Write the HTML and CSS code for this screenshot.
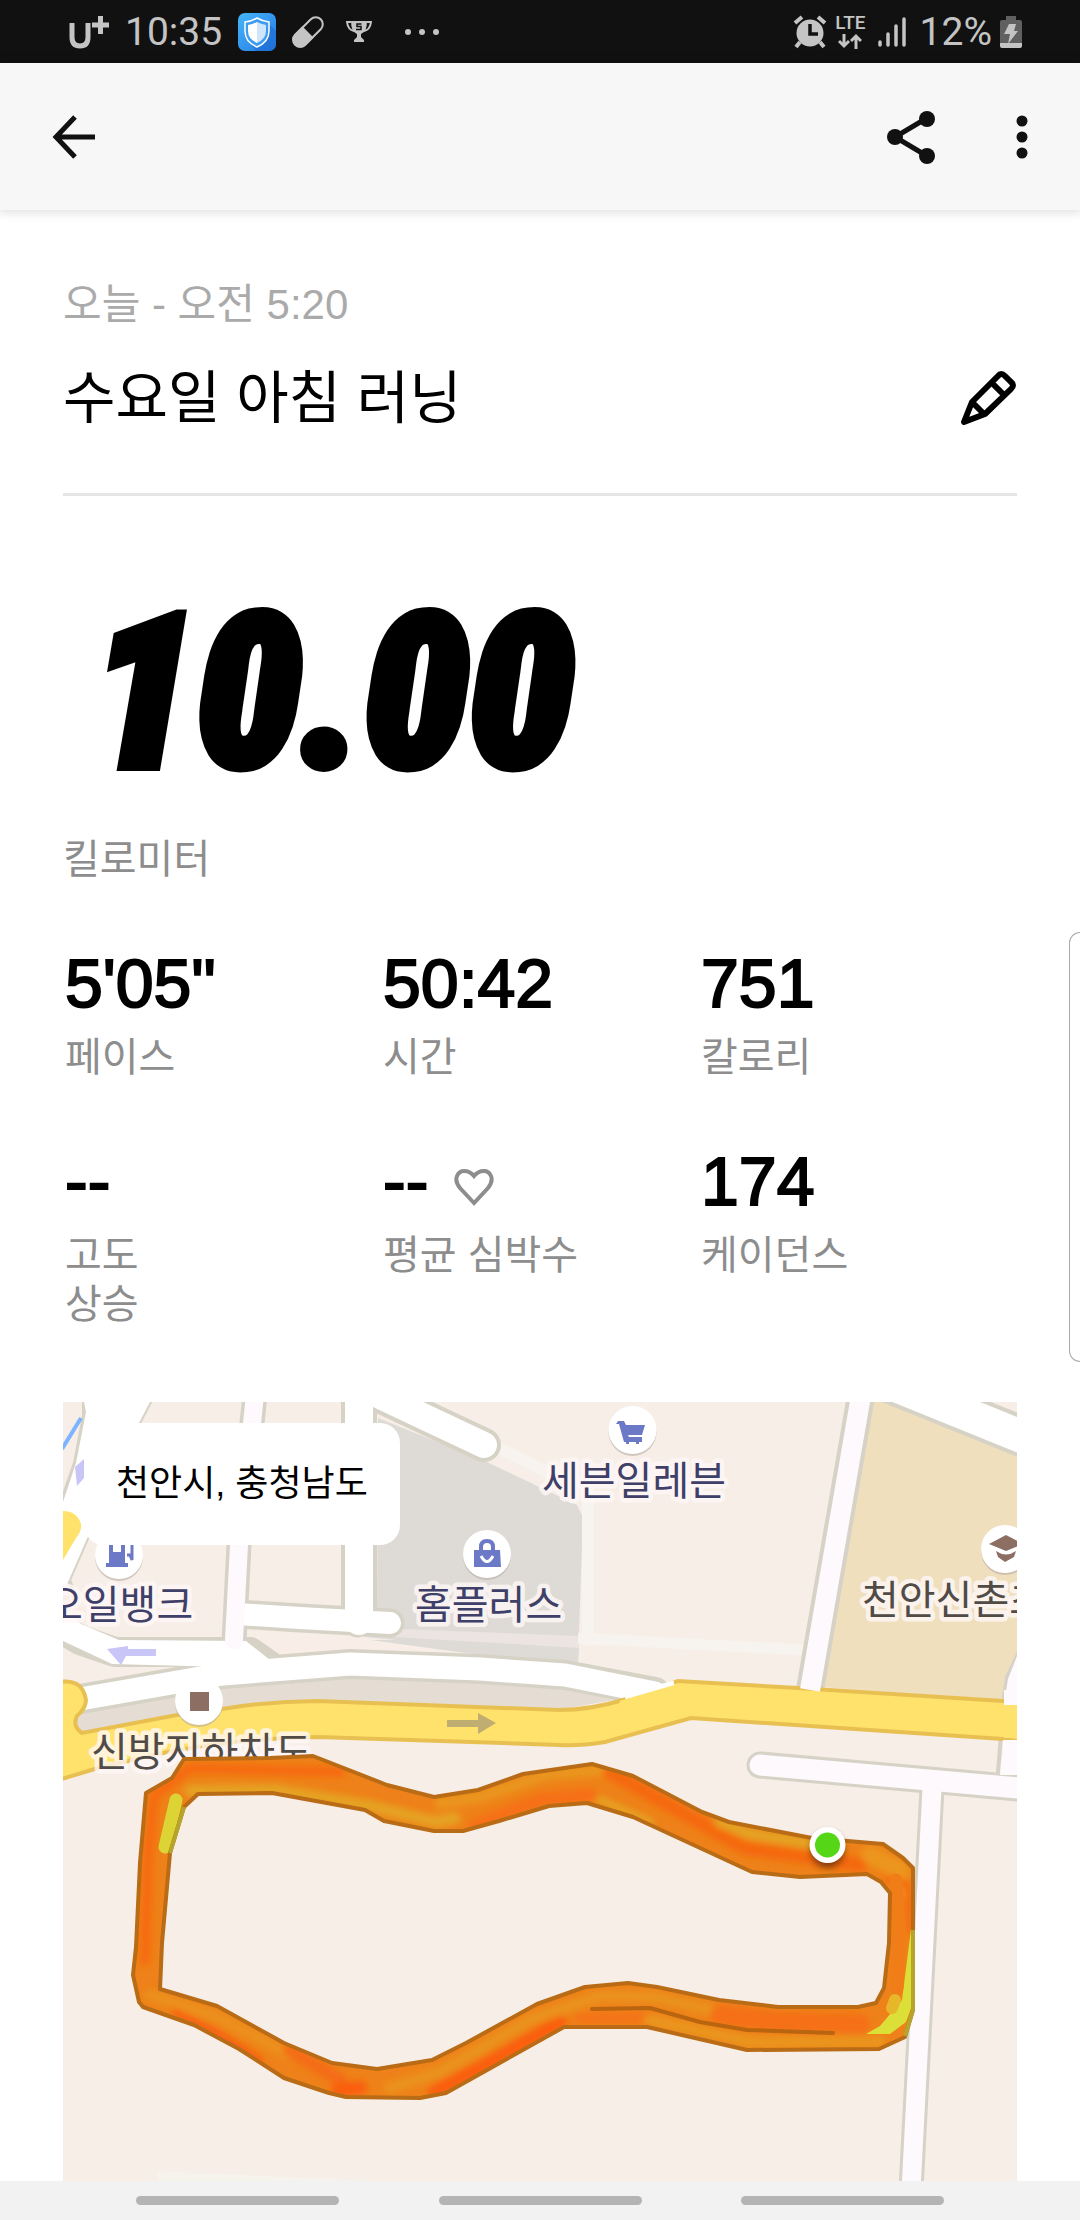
FILE: index.html
```html
<!DOCTYPE html>
<html lang="ko">
<head>
<meta charset="utf-8">
<meta name="viewport" content="width=device-width, initial-scale=1">
<title>수요일 아침 러닝</title>
<link rel="stylesheet" href="styles.css">
</head>
<body>
<div class="status">
  <div class="status-group">
    <svg class="carrier" width="42" height="36" viewBox="0 0 42 36" aria-label="U+"><path d="M3 9v14q0 9 8 9t8-9V9" fill="none" stroke="#c4c4c4" stroke-width="5"/><path d="M23 11h17M31.500 2v18" stroke="#c4c4c4" stroke-width="5"/></svg>
    <span class="clock">10:35</span>
    <svg class="shield" width="38" height="38" viewBox="0 0 38 38" aria-hidden="true"><defs><linearGradient id="sh" x1="0" y1="0" x2="1" y2="1"><stop offset="0" stop-color="#45b5fb"/><stop offset="1" stop-color="#2478e2"/></linearGradient></defs><rect width="38" height="38" rx="7" fill="url(#sh)"/><path d="M31 11l7 7v13q0 7-7 7H18l-6-8z" fill="#1e6bd0" opacity=".6"/><path d="M19 5q5 3 12 4v9q0 11-12 16Q7 29 7 18V9q7-1 12-4z" fill="#3d9cf2" stroke="#fff" stroke-width="1.500"/><path d="M19 9q4 2 9 3v6q0 8-9 12z" fill="#cfe5fb"/><path d="M19 9q-4 2-9 3v6q0 8 9 12z" fill="#fff"/></svg>
    <svg class="pill" width="32" height="32" viewBox="0 0 32 32" aria-hidden="true"><g transform="rotate(45 16 16)"><rect x="9" y="-2" width="14" height="36" rx="7" fill="none" stroke="#c4c4c4" stroke-width="2"/><path d="M8 16h16v11a8 8 0 0 1-16 0z" fill="#c4c4c4"/></g></svg>
    <svg class="trophy" width="26" height="24" viewBox="0 0 26 24" aria-hidden="true"><path d="M5 1h16q0 11-6 13v3l3 3v2H8v-2l3-3v-3Q5 12 5 1z" fill="#c4c4c4"/><path d="M5 2H1q1 8 7 9M21 2h4q-1 8-7 9" fill="none" stroke="#c4c4c4" stroke-width="2"/><path d="M15.500 4h-4.500v2.500h4v3h-5" fill="none" stroke="#111" stroke-width="1.500"/></svg>
    <svg class="dots" width="36" height="8" viewBox="0 0 36 8" fill="#c4c4c4" aria-hidden="true"><circle cx="4" cy="4" r="3"/><circle cx="18" cy="4" r="3"/><circle cx="32" cy="4" r="3"/></svg>
  </div>
  <div class="status-group">
    <svg class="alarm" width="34" height="34" viewBox="0 0 34 34" aria-hidden="true"><circle cx="17" cy="18" r="13.500" fill="#c4c4c4"/><path d="M2 8l7-6M32 8l-7-6" stroke="#c4c4c4" stroke-width="4"/><path d="M7 27l-4 5M27 27l4 5" stroke="#c4c4c4" stroke-width="4"/><path d="M17 9v10h8" fill="none" stroke="#111" stroke-width="3.500"/></svg>
    <span class="lte">LTE<svg width="24" height="16" viewBox="0 0 24 16" fill="none" stroke="#c4c4c4" stroke-width="3" aria-hidden="true"><path d="M6 1v12M1 8l5 5 5-5M18 16V3M13 8l5-5 5 5"/></svg></span>
    <svg class="signal" width="28" height="32" viewBox="0 0 28 32" stroke="#c4c4c4" stroke-width="3.500" stroke-linecap="round" aria-hidden="true"><path d="M2 26v3M10 18v11M18 10v19M26 3v26"/></svg>
    <span class="clock">12%</span>
    <svg class="battery" width="22" height="34" viewBox="0 0 22 34" aria-hidden="true"><path d="M6 1h10v4h4q2 0 2 2v21H0V7q0-2 2-2h4z" fill="#606060"/><path d="M0 28h22v3q0 2-2 2H2q-2 0-2-2z" fill="#c4c4c4"/><path d="M9 9h7l-2 7h4L8 29l2-10H4z" fill="#c4c4c4"/></svg>
  </div>
</div>

<header class="bar">
  <button class="icon-button" type="button" aria-label="뒤로"><svg width="44" height="44" viewBox="0 0 44 44" fill="none" stroke="#111" stroke-width="5"><path d="M43 22H5M23 2L4 22l19 20"/></svg></button>
  <div class="bar-actions">
    <button class="icon-button" type="button" aria-label="공유"><svg width="50" height="54" viewBox="0 0 50 54" fill="#111"><path d="M41 8L9 27l32 19" fill="none" stroke="#111" stroke-width="5"/><circle cx="41" cy="9" r="8"/><circle cx="9" cy="27" r="8"/><circle cx="41" cy="46" r="8"/></svg></button>
    <button class="icon-button" type="button" aria-label="더보기"><svg width="12" height="44" viewBox="0 0 12 44" fill="#111"><circle cx="6" cy="6" r="5.500"/><circle cx="6" cy="22" r="5.500"/><circle cx="6" cy="38" r="5.500"/></svg></button>
  </div>
</header>

<main class="content">
  <section class="heading">
    <p class="date">오늘 - 오전 5:20</p>
    <div class="title-row">
      <h1>수요일 아침 러닝</h1>
      <button class="icon-button" type="button" aria-label="이름 편집"><svg width="58" height="58" viewBox="0 0 58 58" fill="none" stroke="#000" stroke-width="6" stroke-linejoin="round"><path d="M5 53l8-20 26-26q3-4 7 0l6 6q4 3 0 7L26 45zM13 33l12 12M33 14l12 12"/></svg></button>
    </div>
  </section>

  <section class="distance">
    <p class="distance-value">10.00</p>
    <p class="label">킬로미터</p>
  </section>

  <section class="stats">
    <div class="stat"><p class="value">5'05"</p><p class="label">페이스</p></div>
    <div class="stat"><p class="value">50:42</p><p class="label">시간</p></div>
    <div class="stat"><p class="value">751</p><p class="label">칼로리</p></div>
    <div class="stat"><p class="value">--</p><p class="label">고도<br>상승</p></div>
    <div class="stat"><p class="value">--<svg class="heart" width="40" height="38" viewBox="0 0 40 38" fill="none" stroke="#8d8d8d" stroke-width="4" aria-hidden="true"><path d="M20 35L6 20C-2 10 5 3 10 3q6 0 10 5 4-5 10-5c5 0 12 7 4 17z"/></svg></p><p class="label">평균 심박수</p></div>
    <div class="stat"><p class="value">174</p><p class="label">케이던스</p></div>
  </section>

  <section class="map" aria-label="러닝 경로 지도">
    <svg class="map-canvas" viewBox="63 1402 954 779">
      <defs>
        <filter id="soft" x="-50%" y="-50%" width="200%" height="200%"><feGaussianBlur stdDeviation="3"/></filter>
        <clipPath id="band"><path clip-rule="evenodd" d="M146 1793L172 1778 184 1759 270 1758 313 1756 387 1785 434 1797 478 1790 523 1774 592 1764 633 1776 702 1812 729 1822 812 1838 883 1844 903 1858 913 1868 913 2010 905 2037 879 2049 747 2050 647 2027 564 2027 446 2093 420 2098 346 2097 329 2093 284 2078 239 2049 194 2025 143 2007 139 2002 133 1975 136 1947 140 1863zM198 1794L272 1793 365 1810 384 1821 434 1831 463 1831 499 1821 549 1806 587 1803 633 1817 752 1872 800 1877 867 1874 881 1882 890 1893 889 1943 884 1988 876 2003 858 2007 778 2007 719 2000 657 1987 628 1983 585 1987 537 2004 466 2043 432 2060 377 2069 332 2063 284 2043 217 2006 160 1989 162 1943 170 1853 184 1807z"/></clipPath>
      </defs>
      <rect x="63" y="1402" width="954" height="779" fill="#f7eee7"/>
      <!-- blocks -->
      <path d="M378 1418L487 1462 577 1505 583 1517 578 1662 363 1637 377 1610z" fill="#dedbd6"/>
      <path d="M487 1442L588 1492V1645" fill="none" stroke="#f7f3ee" stroke-width="12"/>
      <path d="M400 1629L578 1636v12L380 1636z" fill="#ece4e3"/>
      <path d="M578 1638L803 1650" stroke="#f7f3ee" stroke-width="11"/>
      <path d="M260 1640L363 1637 578 1656v6L270 1655z" fill="#f7eee7" opacity=".8"/>
      <path d="M440 1640L579 1648 578 1662 480 1655 370 1640z" fill="#dedbd6"/>
      <path d="M870 1402h31l116 51v200l-12 24-2 23-181-13z" fill="#efdfbd"/>
      <path d="M81 1733L75 1723 86 1708 222 1685 353 1677 559 1687 626 1698 557 1710 318 1700 180 1715z" fill="#e5ddd4"/>
      <path d="M158 2171L373 2181H158z" fill="#f6f2ec"/>
      <!-- road casings -->
      <g fill="none" stroke="#d6d2c6" stroke-linecap="round" stroke-linejoin="round">
        <path d="M84 1398L84 1416 75 1463 61 1503M150 1402L138 1425 86 1541 69 1580 74 1592" stroke-width="4"/>
        <path d="M255 1395L239 1545 234 1642" stroke-width="25"/>
        <path d="M359 1395L359 1618" stroke-width="36"/>
        <path d="M238 1614L300 1618 390 1623M356 1618l1 5" stroke-width="29"/>
        <path d="M380 1396L484 1445" stroke-width="34"/>
        <path d="M50 1622L80 1640 115 1652 250 1652 270 1666" stroke-width="30"/>
        <path d="M60 1703L86 1698 223 1674 350 1664 480 1669 565 1675 655 1692" stroke-width="30"/>
        <path d="M862 1390L810 1690" stroke-width="28"/>
        <path d="M850 1367L1030 1440" stroke-width="41"/>
        <path d="M1020 1650L1007 1677 1003 1703M1001 1735L998 1772" stroke-width="4"/>
        <path d="M760 1765L1030 1789" stroke-width="27"/>
        <path d="M932 1788L911 2190" stroke-width="25"/>
      </g>
      <!-- road surfaces -->
      <path d="M84 1402H150L138 1425 86 1541 69 1580 63 1590V1502L76 1463 86 1412z" fill="#fff"/>
      <path d="M63 1609L81 1624 119 1640 246 1641 270 1660 262 1668 112 1664 63 1641z" fill="#fff"/>
      <g fill="none" stroke="#fff" stroke-linecap="round" stroke-linejoin="round">
        <path d="M359 1395L359 1621" stroke-width="28"/>
        <path d="M238 1614L300 1618 390 1623" stroke-width="22"/>
        <path d="M380 1396L484 1445" stroke-width="26"/>
        <path d="M60 1703L86 1698 223 1674 350 1664 480 1669 565 1675 655 1693" stroke-width="23"/>
        <path d="M850 1367L1030 1440" stroke-width="33"/>
      </g>
      <g fill="none" stroke="#fdf9fd" stroke-linecap="round">
        <path d="M255 1395L239 1545 234 1640" stroke-width="18"/>
        <path d="M760 1765L1030 1789" stroke-width="21"/>
        <path d="M932 1788L911 2190" stroke-width="19"/>
      </g>
      <path d="M1017 1656L1008 1679 1004 1704V1740L1000 1775h17z" fill="#fdf9fd"/>
      <path d="M62 1449L81 1418" stroke="#7eb4ff" stroke-width="4"/>
      <path d="M75 1467L84 1459V1478L77 1486z" fill="#c9c6f7"/>
      <path d="M63 1511q14 0 18 13 1 7-5 14L63 1560z" fill="#ffe26b"/>
      <path d="M107 1649L128 1646V1649H156V1656L126 1656 121 1665z" fill="#c9c6f7"/>
      <!-- main road -->
      <path d="M55 1683Q82 1676 86 1700 86 1708 77 1716 72 1726 82 1733L177 1715 222 1709Q270 1701 318 1701L559 1710Q590 1710 623 1700L678 1681 798 1688 1003 1701 1030 1703V1743L1003 1739 691 1718 605 1742Q580 1746 559 1745L318 1737Q240 1738 163 1753L98 1768 55 1781z" fill="#ffe26b" stroke="#e8c052" stroke-width="4"/>
      <path d="M625 1697L674 1683" stroke="#fff" stroke-width="5"/><path d="M620 1703L682 1685" stroke="#ffe26b" stroke-width="4"/>
      <path d="M1004 1706V1738H1017V1706z" fill="#ffe26b"/><path d="M1004 1690h13v15h-13zM1003 1740h14v8h-14z" fill="#fdf9fd"/>
      <path d="M862 1390L810 1690" stroke="#fdf9fd" stroke-width="20"/>
      <path d="M447 1720H478V1713L496 1723 478 1734V1727H447z" fill="#c0ad72"/>
      <!-- place labels -->
      <g class="place">
        <text x="542" y="1495">세븐일레븐</text>
        <text x="415" y="1619">홈플러스</text>
        <text x="46" y="1619">오일뱅크</text>
        <text class="place-brown" x="91" y="1766">신방지하차도</text>
        <text class="place-brown" x="862" y="1614">천안신촌초</text>
      </g>
      <!-- place pins -->
      <g fill="#b9aea5" opacity=".6"><circle cx="632.500" cy="1432" r="24"/><circle cx="487" cy="1556" r="24"/><circle cx="119" cy="1557" r="24"/><circle cx="199" cy="1703" r="24"/><circle cx="1005" cy="1551" r="24"/></g>
      <g fill="#fff"><circle cx="632.500" cy="1430" r="24"/><circle cx="487" cy="1554" r="24"/><circle cx="119" cy="1555" r="24"/><circle cx="199" cy="1701" r="24"/><circle cx="1005" cy="1549" r="24"/></g>
      <g fill="#6c79c7"><path d="M618 1421h6l2 4h19l-3 10h-14l1 2h13v5h-3v2h-3v-2h-7v2h-3v-2h-2l-5-18h-3z"/><path d="M474 1550h26l1 17h-27z"/><path d="M109 1540h16v23h3v4h-22v-4h3z"/></g>
      <path d="M481 1551v-4q0-6 6-6t6 6v4" fill="none" stroke="#6c79c7" stroke-width="4"/><path d="M481 1556q6 11 12 0" fill="none" stroke="#fff" stroke-width="3"/>
      <path d="M113 1544h8v8h-8z" fill="#fff"/><path d="M127 1555h3l2 5V1545" fill="none" stroke="#6c79c7" stroke-width="3"/>
      <path d="M190 1692h19v19h-19zM989 1544L1006 1535 1023 1544 1006 1551zM996 1551q10 7 20 0l-2 6-9 5-7-5z" fill="#8d6e63"/>
      <!-- route -->
      <path fill="#ee8119" fill-rule="evenodd" d="M146 1793L172 1778 184 1759 270 1758 313 1756 387 1785 434 1797 478 1790 523 1774 592 1764 633 1776 702 1812 729 1822 812 1838 883 1844 903 1858 913 1868 913 2010 905 2037 879 2049 747 2050 647 2027 564 2027 446 2093 420 2098 346 2097 329 2093 284 2078 239 2049 194 2025 143 2007 139 2002 133 1975 136 1947 140 1863zM198 1794L272 1793 365 1810 384 1821 434 1831 463 1831 499 1821 549 1806 587 1803 633 1817 752 1872 800 1877 867 1874 881 1882 890 1893 889 1943 884 1988 876 2003 858 2007 778 2007 719 2000 657 1987 628 1983 585 1987 537 2004 466 2043 432 2060 377 2069 332 2063 284 2043 217 2006 160 1989 162 1943 170 1853 184 1807z"/>
      <g clip-path="url(#band)" fill="none" stroke-linejoin="round" stroke-linecap="round">
        <g filter="url(#soft)">
          <path d="M145 1960L148 1860 154 1796 190 1768 340 1772" stroke="#f66a10" stroke-width="10"/>
          <path d="M190 1791L275 1790 370 1806 435 1822 455 1818" stroke="#e5a224" stroke-width="12"/>
          <path d="M475 1826L540 1800 590 1795" stroke="#f66f12" stroke-width="14"/>
          <path d="M440 1803L480 1797 545 1775 600 1770" stroke="#ea951f" stroke-width="12"/>
          <path d="M610 1772L660 1800 745 1848 860 1865" stroke="#f5690f" stroke-width="14"/>
          <path d="M720 1822L750 1834 815 1844" stroke="#e5a224" stroke-width="12"/>
          <path d="M600 1800L650 1822" stroke="#e5a224" stroke-width="8"/>
          <path d="M870 1855L900 1870 900 1890" stroke="#ec951f" stroke-width="18"/>
          <path d="M887 1880L908 1884 911 1930" stroke="#f5690f" stroke-width="7"/>
          <path d="M150 1995L220 2018 290 2055" stroke="#ec901e" stroke-width="12"/>
          <path d="M175 2012L215 2032 260 2060" stroke="#fa5808" stroke-width="6"/>
          <path d="M290 2050L340 2080" stroke="#f46d12" stroke-width="14"/>
          <path d="M338 2090L360 2088M435 2092L480 2068 560 2022" stroke="#fa5e0a" stroke-width="14"/>
          <path d="M390 2088L440 2072 530 2020 600 1996 655 1997 720 2012" stroke="#ea921f" stroke-width="12"/>
          <path d="M720 2015L780 2022 860 2024" stroke="#f56f12" stroke-width="20"/>
          <path d="M580 2018H650" stroke="#f47514" stroke-width="12"/>
          <path d="M650 2020L750 2042 880 2042" stroke="#ea951f" stroke-width="12"/>
        </g>
        <path d="M914 1905L902 2000 880 2026 866 2034 890 2034 906 2022 914 2000z" fill="#dbdf38"/>
        <path d="M896 1880L899 1930 897 1988" stroke="#f07d18" stroke-width="13"/>
        <path d="M895 2000L892 2008" stroke="#e8b629" stroke-width="12"/>
        <path d="M592 2009L650 2008 700 2022 747 2030 833 2033" stroke="#b9640f" stroke-width="4"/>
        <path d="M176 1800L165 1847" stroke="#dcd435" stroke-width="13"/>
      </g>
      <g fill="none" stroke="#b96b15" stroke-width="4" stroke-linejoin="round">
        <path d="M146 1793L172 1778 184 1759 270 1758 313 1756 387 1785 434 1797 478 1790 523 1774 592 1764 633 1776 702 1812 729 1822 812 1838 883 1844 903 1858 913 1868 913 2010 905 2037 879 2049 747 2050 647 2027 564 2027 446 2093 420 2098 346 2097 329 2093 284 2078 239 2049 194 2025 143 2007 139 2002 133 1975 136 1947 140 1863z"/>
        <path d="M198 1794L272 1793 365 1810 384 1821 434 1831 463 1831 499 1821 549 1806 587 1803 633 1817 752 1872 800 1877 867 1874 881 1882 890 1893 889 1943 884 1988 876 2003 858 2007 778 2007 719 2000 657 1987 628 1983 585 1987 537 2004 466 2043 432 2060 377 2069 332 2063 284 2043 217 2006 160 1989 162 1943 170 1853 184 1807z"/>
        <path d="M913 1930V2010L905 2036M170 1853L184 1807" stroke="#b5a52c"/>
      </g>
      <ellipse cx="827.500" cy="1850" rx="17" ry="18" fill="#5a2c08" opacity=".7" filter="url(#soft)"/>
      <circle cx="827.500" cy="1845" r="18" fill="#fff"/><circle cx="827.500" cy="1845" r="12.500" fill="#55d617"/>
    </svg>
    <p class="region">천안시, 충청남도</p>
  </section>
</main>

<div class="edge-panel" aria-hidden="true"></div>
<nav class="system-nav" aria-label="시스템 탐색">
  <button type="button" aria-label="최근 앱"></button>
  <button type="button" aria-label="홈"></button>
  <button type="button" aria-label="뒤로 가기"></button>
</nav>
</body>
</html>
```
FILE: styles.css
```css
* { box-sizing: border-box; }

body {
  margin: 0;
  min-height: 100vh;
  display: flex;
  flex-direction: column;
  background: #fff;
  color: #000;
  font-family: "Liberation Sans", "Noto Sans CJK KR", sans-serif;
  font-size: 40px;
  line-height: 49px;
}

p, h1 { margin: 0; }
svg { display: block; flex: none; }
button { margin: 0; padding: 0; border: 0; background: none; cursor: pointer; }

/* Status bar */
.status {
  height: 63px;
  padding: 0 58px 0 69px;
  display: flex;
  align-items: center;
  justify-content: space-between;
  background: #111;
  color: #c4c4c4;
}
.status-group { display: flex; align-items: center; }
.clock { font: 39px/46px Roboto, sans-serif; }
.carrier { margin: 0 14px 0 0; }
.shield { margin-left: 16px; }
.pill { margin-left: 16px; }
.trophy { margin-left: 22px; }
.dots { margin-left: 32px; }
.lte {
  display: flex;
  flex-direction: column;
  align-items: center;
  gap: 2px;
  margin: 0 12px 0 8px;
  font: 500 19px/16px Roboto, sans-serif;
}
.signal { margin-right: 14px; }
.battery { margin-left: 8px; }

/* App bar */
.bar {
  height: 147px;
  padding: 0 52px;
  display: flex;
  align-items: center;
  justify-content: space-between;
  background: #f7f7f7;
  box-shadow: 0 0 10px 2px rgba(0, 0, 0, .14);
}
.bar-actions { display: flex; align-items: center; gap: 80px; }

.content { padding: 71px 63px 0; flex: 1; }

.heading { padding-bottom: 63px; border-bottom: 3px solid #e5e5e5; }
.date { font-size: 42px; line-height: 48px; color: #aaa; }
.title-row {
  margin-top: 37px;
  display: flex;
  align-items: center;
  justify-content: space-between;
}
h1 { font-size: 57px; line-height: 64px; font-weight: 400; }

.distance { padding-top: 98px; }
.distance-value {
  padding-left: 28px;
  font: italic 900 212px/200px "Roboto Condensed", Roboto, sans-serif;
  -webkit-text-stroke: 10px #000;
}
.distance .label { margin-top: 41px; }
.label { color: #8d8d8d; }

.stats {
  margin-top: 63px;
  display: grid;
  grid-template-columns: repeat(3, 1fr);
  row-gap: 63px;
}
.stat { padding-left: 2px; }
.value {
  display: flex;
  align-items: center;
  margin-bottom: 14px;
  font-size: 68px;
  line-height: 72px;
  -webkit-text-stroke: 2px #000;
}
.heart { margin: 12px 0 0 26px; }

/* Map */
.map { position: relative; margin-top: 73px; }
.map-canvas { width: 100%; height: auto; }
.place text {
  font: 400 40px "Noto Sans CJK KR", sans-serif;
  fill: #3f4068;
  stroke: rgba(255, 248, 248, .8);
  stroke-width: 9px;
  stroke-linejoin: round;
  paint-order: stroke;
}
.place .place-brown { fill: #504b47; }
.region {
  position: absolute;
  top: 21px;
  left: 21px;
  padding: 36px 32px 37px;
  border-radius: 20px;
  background: #fff;
  font-size: 36px;
}

.edge-panel {
  position: absolute;
  top: 932px;
  right: 0;
  width: 11px;
  height: 430px;
  border: 1px solid #aaa;
  border-right: 0;
  border-radius: 16px 0 0 16px;
  background: #fff;
}

/* System navigation */
.system-nav {
  height: 39px;
  padding: 0 136px;
  display: flex;
  align-items: center;
  justify-content: space-between;
  background: #f2f2f2;
}
.system-nav button {
  width: 203px;
  height: 9px;
  border-radius: 5px;
  background: #b4b4b4;
}
```
